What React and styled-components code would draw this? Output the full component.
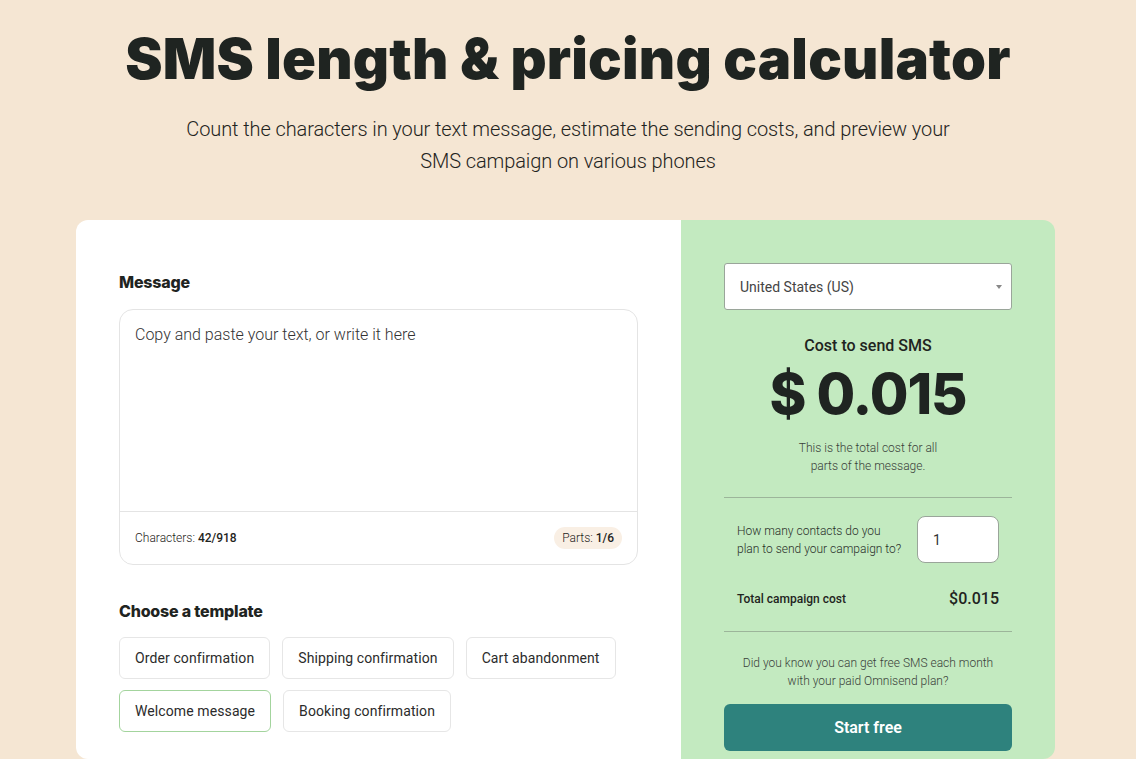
import React, { useState } from "react";
import styled, { createGlobalStyle } from "styled-components";

const templates = [
  ["Order confirmation", "Shipping confirmation", "Cart abandonment"],
  ["Welcome message", "Booking confirmation"],
];

const GlobalStyle = createGlobalStyle`
  html, body {
    margin: 0;
    padding: 0;
    background: #f5e6d3;
    font-family: Roboto, "Liberation Sans", sans-serif;
    color: #1f2421;
  }
  * { box-sizing: border-box; }
`;

const Page = styled.div`
  height: 759px;
  overflow: hidden;
  display: flex;
  flex-direction: column;
  align-items: center;
`;

const Title = styled.h1`
  margin: 21px 0 0;
  font-family: Inter, sans-serif;
  font-weight: 900;
  font-size: 56px;
  letter-spacing: 0.2px;
  line-height: 76px;
`;

const Subtitle = styled.p`
  margin: 16px 0 0;
  width: 800px;
  text-align: center;
  font-weight: 300;
  font-size: 20px;
  line-height: 32px;
  letter-spacing: -0.1px;
  color: #1f2421;
`;

const Card = styled.div`
  margin-top: 43px;
  align-self: flex-start;
  margin-left: 76px;
  width: 979px;
  display: grid;
  grid-template-columns: 605px 374px;
  border-radius: 12px;
  overflow: hidden;
  flex: 1;
`;

const Left = styled.div`
  background: #fff;
  padding: 52px 43px 0 43px;
`;

const Right = styled.div`
  background: #c3eac0;
  padding: 43px 43px 0 43px;
  display: flex;
  flex-direction: column;
  align-items: center;
`;

const Label = styled.h3`
  margin: 0 0 ${(p) => p.$gap || 16}px;
  font-family: Inter, sans-serif;
  font-weight: 800;
  font-size: 16px;
  letter-spacing: -0.2px;
`;

const TextBox = styled.div`
  width: 519px;
  height: 256px;
  border: 1px solid #e4e4e4;
  border-radius: 14px;
  display: flex;
  flex-direction: column;
`;

const TextArea = styled.textarea`
  flex: 1;
  border: none;
  outline: none;
  resize: none;
  padding: 15px 15px;
  font-family: Roboto, sans-serif;
  font-weight: 300;
  font-size: 16px;
  color: #1f2421;
  background: transparent;
  &::placeholder { color: #333; }
`;

const Footer = styled.div`
  height: 53px;
  border-top: 1px solid #e4e4e4;
  display: flex;
  align-items: center;
  justify-content: space-between;
  padding: 0 15px 0 15px;
  font-size: 12px;
  font-weight: 300;
`;

const Pill = styled.span`
  background: #f9efe4;
  border-radius: 12px;
  padding: 4px 8px;
`;

const Strong = styled.b`
  font-weight: 500;
`;

const Spacer = styled.div`
  height: ${(p) => p.$h}px;
`;

const Templates = styled.div`
  display: flex;
  flex-direction: column;
  gap: 11px;
`;

const TemplateRow = styled.div`
  display: flex;
  gap: 12px;
`;

const TemplateBtn = styled.button`
  flex: none;
  white-space: nowrap;
  height: 42px;
  padding: 0 15px;
  border-radius: 6px;
  border: 1px solid ${(p) => (p.$active ? "#a3d49d" : "#e6e6e6")};
  background: #fff;
  font-family: Roboto, sans-serif;
  font-size: 14px;
  color: #2b2b2b;
  letter-spacing: 0.1px;
  cursor: pointer;
`;

const Select = styled.div`
  width: 288px;
  height: 47px;
  background: #fff;
  border: 1px solid #9aa59a;
  border-radius: 3px;
  display: flex;
  align-items: center;
  justify-content: space-between;
  padding: 0 9px 0 15px;
  font-size: 14px;
  color: #444;
`;

const Caret = styled.span`
  width: 0;
  height: 0;
  border-left: 3px solid transparent;
  border-right: 3px solid transparent;
  border-top: 4px solid #888;
`;

const CostLabel = styled.div`
  margin-top: 26px;
  font-size: 16px;
  font-weight: 500;
`;

const Price = styled.div`
  margin-top: 7px;
  font-family: Inter, sans-serif;
  font-weight: 800;
  font-size: 56px;
  line-height: 64px;
  letter-spacing: -1px;
`;

const Note = styled.p`
  margin: ${(p) => p.$top || 0}px 0 0;
  text-align: center;
  font-size: 12px;
  font-weight: 300;
  line-height: 18px;
  color: #3a3f3a;
  width: ${(p) => p.$width || 288}px;
`;

const Divider = styled.hr`
  width: 288px;
  border: none;
  border-top: 1px solid #9cb59a;
  margin: ${(p) => p.$top || 0}px 0 0;
`;

const Row = styled.div`
  width: 288px;
  display: flex;
  align-items: center;
  justify-content: space-between;
  padding: 0 13px;
  margin-top: ${(p) => p.$top || 0}px;
`;

const Question = styled.span`
  font-size: 12px;
  font-weight: 300;
  line-height: 18px;
  color: #2a2f2a;
`;

const NumberInput = styled.input`
  width: 82px;
  height: 47px;
  border: 1px solid #9aa59a;
  border-radius: 8px;
  padding: 0 15px;
  font-family: Roboto, sans-serif;
  font-size: 14px;
  outline: none;
  color: #333;
`;

const TotalLabel = styled.span`
  font-size: 12px;
  font-weight: 500;
`;

const TotalValue = styled.span`
  font-size: 16px;
  font-weight: 500;
`;

const StartBtn = styled.button`
  margin-top: 14px;
  width: 288px;
  height: 47px;
  border: none;
  border-radius: 6px;
  background: #2e827d;
  color: #fff;
  font-family: Roboto, sans-serif;
  font-weight: 600;
  font-size: 16px;
  cursor: pointer;
`;

export default function App() {
  const [text, setText] = useState("");
  const [contacts, setContacts] = useState("1");
  const [active, setActive] = useState("Welcome message");

  return (
    <Page>
      <GlobalStyle />
      <Title>SMS length &amp; pricing calculator</Title>
      <Subtitle>
        Count the characters in your text message, estimate the sending costs, and preview your
        SMS campaign on various phones
      </Subtitle>
      <Card>
        <Left>
          <Label $gap={17}>Message</Label>
          <TextBox>
            <TextArea
              value={text}
              onChange={(e) => setText(e.target.value)}
              placeholder="Copy and paste your text, or write it here"
            />
            <Footer>
              <span>
                Characters: <Strong>42/918</Strong>
              </span>
              <Pill>
                Parts: <Strong>1/6</Strong>
              </Pill>
            </Footer>
          </TextBox>
          <Spacer $h={36} />
          <Label $gap={16}>Choose a template</Label>
          <Templates>
            {templates.map((row, i) => (
              <TemplateRow key={i}>
                {row.map((t) => (
                  <TemplateBtn key={t} $active={active === t} onClick={() => setActive(t)}>
                    {t}
                  </TemplateBtn>
                ))}
              </TemplateRow>
            ))}
          </Templates>
        </Left>
        <Right>
          <Select>
            United States (US)
            <Caret />
          </Select>
          <CostLabel>Cost to send SMS</CostLabel>
          <Price>$ 0.015</Price>
          <Note $top={13} $width={150}>
            This is the total cost for all parts of the message.
          </Note>
          <Divider $top={22} />
          <Row $top={18}>
            <Question>
              How many contacts do you
              <br />
              plan to send your campaign to?
            </Question>
            <NumberInput value={contacts} onChange={(e) => setContacts(e.target.value)} />
          </Row>
          <Row $top={26}>
            <TotalLabel>Total campaign cost</TotalLabel>
            <TotalValue>$0.015</TotalValue>
          </Row>
          <Divider $top={23} />
          <Note $top={22} $width={260}>
            Did you know you can get free SMS each month with your paid Omnisend plan?
          </Note>
          <StartBtn>Start free</StartBtn>
        </Right>
      </Card>
    </Page>
  );
}
